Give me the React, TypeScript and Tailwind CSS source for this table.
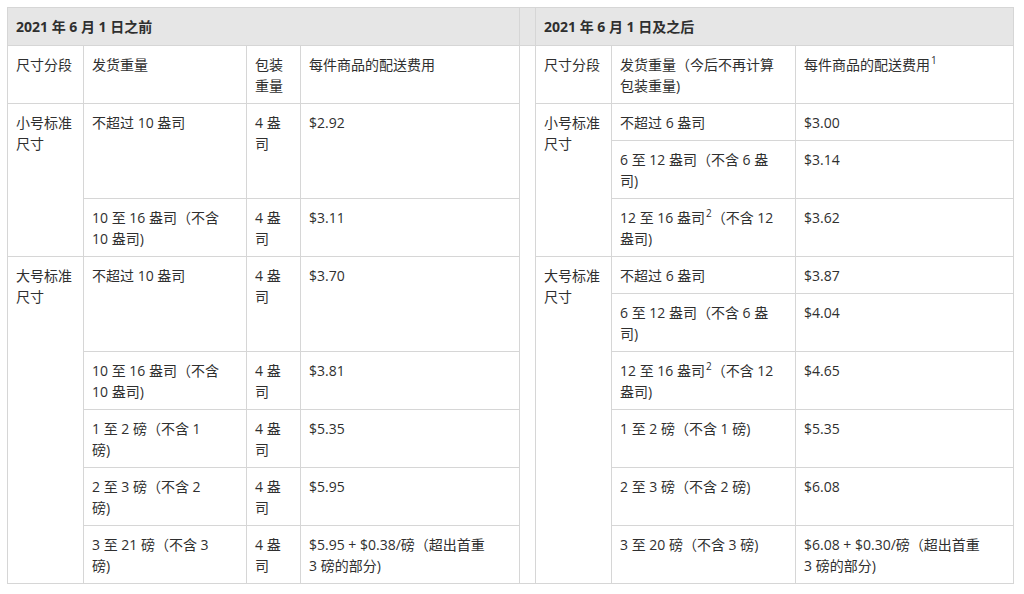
import React from "react";

const td = "border border-[#d6d6d6] align-top pl-2 pr-1 pt-2 pb-[7px] whitespace-nowrap";
const Sup = ({ n }: { n: string }) => (
  <sup className="text-[10px] relative -top-[6px] leading-none ml-[1px]">{n}</sup>
);

export default function App() {
  return (
    <div className="w-[1024px] h-[594px] bg-white pt-[7px] pl-[7px]" style={{ fontFamily: '"Open Sans", "Noto Sans CJK SC", sans-serif' }}>
      <table className="table-fixed border-collapse text-[14px] leading-[21px] text-[#2f2f2f]">
        <colgroup>
          <col className="w-[76px]" />
          <col className="w-[163px]" />
          <col className="w-[54px]" />
          <col className="w-[219px]" />
          <col className="w-[16px]" />
          <col className="w-[76px]" />
          <col className="w-[184px]" />
          <col className="w-[218px]" />
        </colgroup>
        <tbody>
          <tr className="bg-[#e6e6e6]">
            <td colSpan={4} className="border border-[#d6d6d6] pl-2 pt-2 pb-2 font-bold">2021 年 6 月 1 日之前</td>
            <td className="border border-[#d6d6d6]"></td>
            <td colSpan={3} className="border border-[#d6d6d6] pl-2 pt-2 pb-2 font-bold">2021 年 6 月 1 日及之后</td>
          </tr>
          <tr>
            <td className={td}>尺寸分段</td>
            <td className={td}>发货重量</td>
            <td className={td}>包装<br />重量</td>
            <td className={td}>每件商品的配送费用</td>
            <td rowSpan={10} className="border border-[#d6d6d6]"></td>
            <td className={td}>尺寸分段</td>
            <td className={td}>发货重量（今后不再计算<br />包装重量)</td>
            <td className={td}>每件商品的配送费用<Sup n="1" /></td>
          </tr>
          {/* r1 */}
          <tr>
            <td rowSpan={3} className={td}>小号标准<br />尺寸</td>
            <td rowSpan={2} className={td}>不超过 10 盎司</td>
            <td rowSpan={2} className={td}>4 盎<br />司</td>
            <td rowSpan={2} className={td}>$2.92</td>
            <td rowSpan={3} className={td}>小号标准<br />尺寸</td>
            <td className={td}>不超过 6 盎司</td>
            <td className={td}>$3.00</td>
          </tr>
          {/* r2 */}
          <tr>
            <td className={td}>6 至 12 盎司（不含 6 盎<br />司)</td>
            <td className={td}>$3.14</td>
          </tr>
          {/* r3 */}
          <tr>
            <td className={td}>10 至 16 盎司（不含<br />10 盎司)</td>
            <td className={td}>4 盎<br />司</td>
            <td className={td}>$3.11</td>
            <td className={td}>12 至 16 盎司<Sup n="2" />（不含 12<br />盎司)</td>
            <td className={td}>$3.62</td>
          </tr>
          {/* r4 */}
          <tr>
            <td rowSpan={6} className={td}>大号标准<br />尺寸</td>
            <td rowSpan={2} className={td}>不超过 10 盎司</td>
            <td rowSpan={2} className={td}>4 盎<br />司</td>
            <td rowSpan={2} className={td}>$3.70</td>
            <td rowSpan={6} className={td}>大号标准<br />尺寸</td>
            <td className={td}>不超过 6 盎司</td>
            <td className={td}>$3.87</td>
          </tr>
          {/* r5 */}
          <tr>
            <td className={td}>6 至 12 盎司（不含 6 盎<br />司)</td>
            <td className={td}>$4.04</td>
          </tr>
          {/* r6 */}
          <tr>
            <td className={td}>10 至 16 盎司（不含<br />10 盎司)</td>
            <td className={td}>4 盎<br />司</td>
            <td className={td}>$3.81</td>
            <td className={td}>12 至 16 盎司<Sup n="2" />（不含 12<br />盎司)</td>
            <td className={td}>$4.65</td>
          </tr>
          {/* r7 */}
          <tr>
            <td className={td}>1 至 2 磅（不含 1<br />磅)</td>
            <td className={td}>4 盎<br />司</td>
            <td className={td}>$5.35</td>
            <td className={td}>1 至 2 磅（不含 1 磅)</td>
            <td className={td}>$5.35</td>
          </tr>
          {/* r8 */}
          <tr>
            <td className={td}>2 至 3 磅（不含 2<br />磅)</td>
            <td className={td}>4 盎<br />司</td>
            <td className={td}>$5.95</td>
            <td className={td}>2 至 3 磅（不含 2 磅)</td>
            <td className={td}>$6.08</td>
          </tr>
          {/* r9 */}
          <tr>
            <td className={td}>3 至 21 磅（不含 3<br />磅)</td>
            <td className={td}>4 盎<br />司</td>
            <td className={td}>$5.95 + $0.38/磅（超出首重<br />3 磅的部分)</td>
            <td className={td}>3 至 20 磅（不含 3 磅)</td>
            <td className={td}>$6.08 + $0.30/磅（超出首重<br />3 磅的部分)</td>
          </tr>
        </tbody>
      </table>
    </div>
  );
}
